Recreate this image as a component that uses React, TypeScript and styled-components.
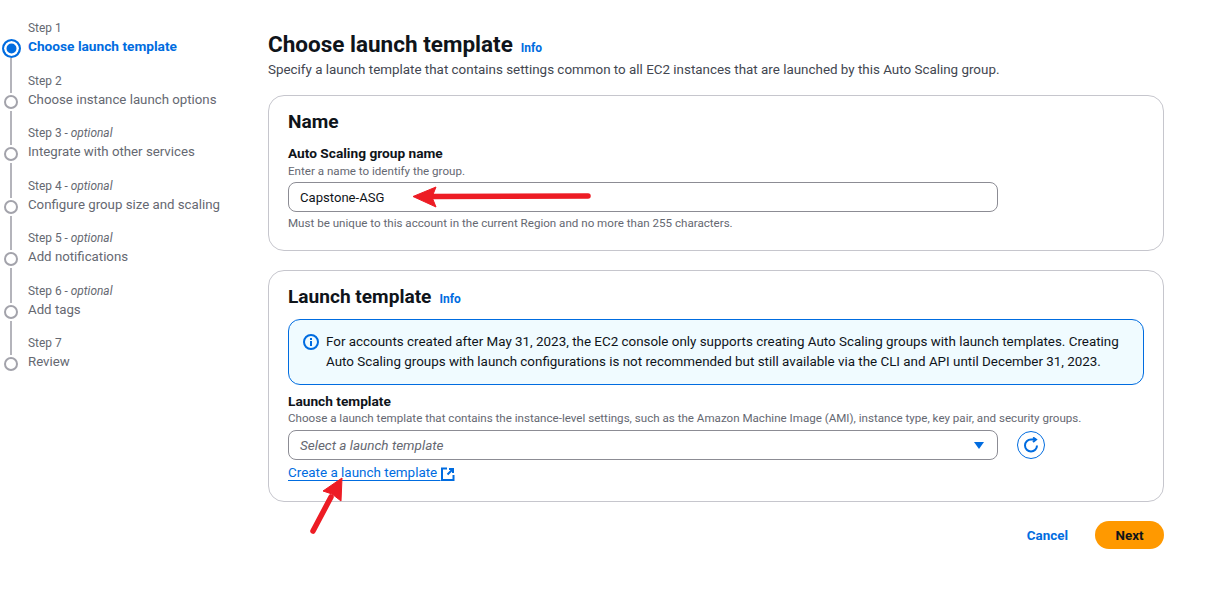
import React from 'react';
import styled, { createGlobalStyle } from 'styled-components';

const GlobalStyle = createGlobalStyle`
  html, body {
    margin: 0;
    padding: 0;
    background: #ffffff;
    color: #0f141a;
    font-family: Roboto, 'Noto Sans', sans-serif;
    font-size: 14px;
  }
  * {
    box-sizing: border-box;
  }
`;

const Page = styled.div`
  position: relative;
  width: 1209px;
  height: 608px;
  overflow: hidden;
  display: flex;
  align-items: flex-start;
`;

const Sidebar = styled.nav`
  width: 268px;
  flex: none;
  padding: 20px 0 0 4px;
  display: flex;
  flex-direction: column;
`;

const Step = styled.div`
  position: relative;
  height: 52.5px;
  display: grid;
  grid-template-columns: 24px 1fr;
  &:not(:last-child)::after {
    content: '';
    position: absolute;
    left: 6px;
    top: 38px;
    bottom: -20px;
    width: 2px;
    background: #b4b4bb;
  }
`;

const Dot = styled.span<{ $active?: boolean }>`
  grid-column: 1;
  margin-top: ${({ $active }) => ($active ? '19px' : '22px')};
  margin-left: ${({ $active }) => ($active ? '-2.5px' : '0')};
  width: ${({ $active }) => ($active ? '19px' : '14px')};
  height: ${({ $active }) => ($active ? '19px' : '14px')};
  border-radius: 50%;
  border: 2px solid ${({ $active }) => ($active ? '#006ce0' : '#a3a3ab')};
  background: ${({ $active }) => ($active ? '#006ce0' : '#fff')};
  box-shadow: ${({ $active }) => ($active ? 'inset 0 0 0 2.5px #fff' : 'none')};
`;

const StepText = styled.div`
  grid-column: 2;
  display: flex;
  flex-direction: column;
`;

const StepLabel = styled.span`
  font-size: 11.9px;
  line-height: 16px;
  color: #656871;
  em {
    font-style: italic;
  }
`;

const StepTitle = styled.span<{ $active?: boolean }>`
  margin-top: ${({ $active }) => ($active ? '0' : '1px')};
  font-size: ${({ $active }) => ($active ? '13.7px' : '13.25px')};
  line-height: 20px;
  font-weight: ${({ $active }) => ($active ? 700 : 400)};
  color: ${({ $active }) => ($active ? '#006ce0' : '#656871')};
`;

const Main = styled.main`
  width: 896px;
  flex: none;
  padding-top: 30px;
`;

const PageTitle = styled.div`
  display: flex;
  align-items: baseline;
  gap: 8px;
  h1 {
    margin: 0;
    font-size: 22.5px;
    line-height: 29px;
    font-weight: 700;
    color: #0f141a;
  }
`;

const InfoLink = styled.a`
  font-size: 12px;
  font-weight: 700;
  color: #006ce0;
`;

const PageDescription = styled.p`
  margin: 2px 0 16px;
  font-size: 13.4px;
  line-height: 18px;
  color: #424650;
`;

const Card = styled.section<{ $height: number }>`
  height: ${({ $height }) => $height}px;
  margin-bottom: 19px;
  border: 1px solid #c6c6cd;
  border-radius: 16px;
  padding: 15px 19px;
`;

const CardTitle = styled.div`
  display: flex;
  align-items: baseline;
  gap: 8px;
  height: 22px;
  h2 {
    margin: 0;
    font-size: 19.1px;
    line-height: 22px;
    font-weight: 700;
    color: #0f141a;
  }
`;

const Label = styled.div<{ $top: number }>`
  margin-top: ${({ $top }) => $top}px;
  font-size: 13.7px;
  line-height: 18px;
  font-weight: 700;
  color: #0f141a;
`;

const Hint = styled.div<{ $top?: number }>`
  margin-top: ${({ $top }) => $top ?? 0}px;
  font-size: 11.6px;
  line-height: 16px;
  color: #656871;
`;

const Field = styled.div<{ $top: number }>`
  width: 710px;
  height: 30px;
  margin-top: ${({ $top }) => $top}px;
  padding: 0 11px;
  display: flex;
  align-items: center;
  justify-content: space-between;
  border: 1px solid #8c8c94;
  border-radius: 8px;
  font-size: 13.1px;
  color: #0f141a;
`;

const Placeholder = styled.span`
  font-size: 13.5px;
  font-style: italic;
  color: #656871;
`;

const Caret = styled.span`
  width: 0;
  height: 0;
  margin-right: 2px;
  border-left: 5.5px solid transparent;
  border-right: 5.5px solid transparent;
  border-top: 7px solid #006ce0;
`;

const Alert = styled.div`
  height: 66px;
  margin-top: 11px;
  padding: 12px 16px 0 14px;
  display: flex;
  gap: 7px;
  background: #f0fbff;
  border: 1px solid #006ce0;
  border-radius: 12px;
  font-size: 13.4px;
  line-height: 20px;
  color: #0f141a;
`;

const AlertIcon = styled.svg`
  flex: none;
  margin-top: 2px;
`;

const SelectRow = styled.div`
  display: flex;
  align-items: center;
  gap: 19px;
`;

const RefreshButton = styled.button`
  width: 28px;
  height: 28px;
  margin-top: 4px;
  padding: 0;
  display: flex;
  align-items: center;
  justify-content: center;
  background: #fff;
  border: 1px solid #006ce0;
  border-radius: 50%;
`;

const CreateLink = styled.a`
  display: inline-flex;
  align-items: center;
  gap: 0;
  margin-top: 4px;
  font-size: 13.45px;
  line-height: 18px;
  color: #006ce0;
  span {
    text-decoration: underline;
    text-underline-offset: 3px;
  }
  svg {
    margin-top: 1px;
  }
`;

const Actions = styled.div`
  display: flex;
  align-items: center;
  justify-content: flex-end;
  gap: 27px;
  height: 28px;
`;

const CancelButton = styled.button`
  padding: 0;
  background: none;
  border: none;
  font-family: inherit;
  font-size: 13.4px;
  font-weight: 700;
  color: #006ce0;
`;

const NextButton = styled.button`
  width: 69px;
  height: 28px;
  padding: 0;
  background: #ff9900;
  border: none;
  border-radius: 14px;
  font-family: inherit;
  font-size: 13.4px;
  font-weight: 700;
  color: #0f141a;
`;

// red annotation arrows pasted over the screenshot
const Annotation = styled.svg`
  position: absolute;
  left: 0;
  top: 0;
  pointer-events: none;
`;

const steps = [
  { label: 'Step 1', title: 'Choose launch template', active: true },
  { label: 'Step 2', title: 'Choose instance launch options' },
  { label: 'Step 3', title: 'Integrate with other services', optional: true },
  { label: 'Step 4', title: 'Configure group size and scaling', optional: true },
  { label: 'Step 5', title: 'Add notifications', optional: true },
  { label: 'Step 6', title: 'Add tags', optional: true },
  { label: 'Step 7', title: 'Review' },
];

export default function App() {
  return (
    <Page>
      <GlobalStyle />
      <Sidebar>
        {steps.map(({ label, title, active, optional }) => (
          <Step key={label}>
            <Dot $active={active} />
            <StepText>
              <StepLabel>
                {label}
                {optional && (
                  <>
                    {' - '}
                    <em>optional</em>
                  </>
                )}
              </StepLabel>
              <StepTitle $active={active}>{title}</StepTitle>
            </StepText>
          </Step>
        ))}
      </Sidebar>
      <Main>
        <PageTitle>
          <h1>Choose launch template</h1>
          <InfoLink>Info</InfoLink>
        </PageTitle>
        <PageDescription>
          Specify a launch template that contains settings common to all EC2 instances that are
          launched by this Auto Scaling group.
        </PageDescription>

        <Card $height={156}>
          <CardTitle>
            <h2>Name</h2>
          </CardTitle>
          <Label $top={11}>Auto Scaling group name</Label>
          <Hint $top={1}>Enter a name to identify the group.</Hint>
          <Field $top={3}>Capstone-ASG</Field>
          <Hint $top={3}>Must be unique to this account in the current Region and no more than 255 characters.</Hint>
        </Card>

        <Card $height={232}>
          <CardTitle>
            <h2>Launch template</h2>
            <InfoLink>Info</InfoLink>
          </CardTitle>
          <Alert>
            <AlertIcon width="16" height="16" viewBox="0 0 16 16" fill="none" stroke="#006ce0" strokeWidth="2">
              <circle cx="8" cy="8" r="7" />
              <path d="M8 7v5M8 4v2" />
            </AlertIcon>
            <div>
              For accounts created after May 31, 2023, the EC2 console only supports creating Auto Scaling groups with
              launch templates. Creating Auto Scaling groups with launch configurations is not recommended but still
              available via the CLI and API until December 31, 2023.
            </div>
          </Alert>
          <Label $top={7}>Launch template</Label>
          <Hint>
            Choose a launch template that contains the instance-level settings, such as the Amazon Machine Image (AMI),
            instance type, key pair, and security groups.
          </Hint>
          <SelectRow>
            <Field $top={4}>
              <Placeholder>Select a launch template</Placeholder>
              <Caret />
            </Field>
            <RefreshButton aria-label="Refresh">
              <svg width="16" height="16" viewBox="0 0 16 16" fill="none" stroke="#006ce0" strokeWidth="2">
                <path d="M14 8.5A6 6 0 1 1 8 2.5h5" />
                <path d="M10 0.5l3 2-3 2.5" />
              </svg>
            </RefreshButton>
          </SelectRow>
          <CreateLink>
            <span>Create a launch template&nbsp;</span>
            <svg width="14" height="14" viewBox="0 0 14 14" fill="none" stroke="#006ce0" strokeWidth="2">
              <path d="M6 1.5H1v11.5h11.5V8" />
              <path d="M8 2h4v4M12 2L6.5 7.5" />
            </svg>
          </CreateLink>
        </Card>

        <Actions>
          <CancelButton>Cancel</CancelButton>
          <NextButton>Next</NextButton>
        </Actions>
      </Main>

      <Annotation width="1209" height="608" viewBox="0 0 1209 608">
        <path d="M588 196L432 196.5" stroke="#ed1c24" strokeWidth="5.5" strokeLinecap="round" />
        <path d="M413 196.5L436 187L432 197L436 207Z" fill="#ed1c24" stroke="#ed1c24" strokeWidth="1" />
        <path d="M313 531L331 497" stroke="#ed1c24" strokeWidth="5.5" strokeLinecap="round" />
        <path d="M342 478L323 491L332 494L341 501Z" fill="#ed1c24" stroke="#ed1c24" strokeWidth="1" />
      </Annotation>
    </Page>
  );
}
